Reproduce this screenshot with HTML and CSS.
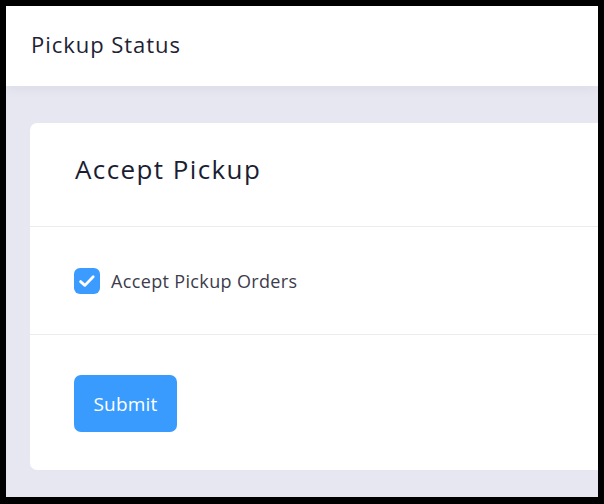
FILE: index.html
```html
<!DOCTYPE html>
<html>
<head>
<meta charset="utf-8">
<link rel="stylesheet" href="styles.css">
</head>
<body>
<div class="frame">
  <header class="topbar">Pickup Status</header>
  <main class="content">
    <section class="card">
      <div class="card-header"><h2 class="card-title">Accept Pickup</h2></div>
      <div class="card-body">
        <label class="check">
          <span class="box"><svg width="18" height="18" viewBox="0 0 18 18"><path d="M2.6 9.6 L6.9 13.4 L15.2 4.8" fill="none" stroke="#fff" stroke-width="2.8" stroke-linecap="round" stroke-linejoin="round"/></svg></span>
          <span class="check-label">Accept Pickup Orders</span>
        </label>
      </div>
      <div class="card-footer"><button class="btn">Submit</button></div>
    </section>
  </main>
</div>
</body>
</html>
```
FILE: styles.css
```css
html, body { margin: 0; padding: 0; }
body { background: #000; width: 604px; height: 504px; overflow: hidden; font-family: "Open Sans", "Noto Sans", sans-serif; }
.frame { margin: 6px 6px 7px 6px; height: 491px; overflow: hidden; background: #e7e7f1; display: flex; flex-direction: column; }
.topbar { height: 80px; flex: none; background: #fff; display: flex; align-items: center; padding: 0 0 4px 25px; box-sizing: border-box; font-size: 22px; letter-spacing: 0.95px; color: #1e2235; box-shadow: 0 2px 12px rgba(40,40,90,0.06); position: relative; z-index: 1; }
.content { flex: 1; padding: 37px 0 0 24px; }
.card { width: 700px; background: #fff; border-radius: 7px; }
.card-header { height: 104px; display: flex; align-items: center; padding: 0 0 12px 45px; border-bottom: 1px solid #ececf0; box-sizing: border-box; }
.card-title { margin: 0; font-weight: 400; font-size: 26px; letter-spacing: 1.4px; color: #1a1e33; }
.card-body { height: 108px; display: flex; align-items: center; padding-left: 44px; border-bottom: 1px solid #ececf0; box-sizing: border-box; }
.check { display: flex; align-items: center; gap: 11px; }
.box { width: 26px; height: 26px; border-radius: 6px; background: #3b9bff; display: flex; align-items: center; justify-content: center; }
.check-label { font-size: 18px; letter-spacing: 0.35px; color: #3c3c4c; }
.card-footer { height: 135px; padding: 40px 0 0 44px; box-sizing: border-box; }
.btn { width: 103px; height: 57px; border: none; border-radius: 7px; background: #3a9bff; color: #fff; font-family: inherit; font-size: 19px; letter-spacing: 0.2px; padding: 0; }
```
